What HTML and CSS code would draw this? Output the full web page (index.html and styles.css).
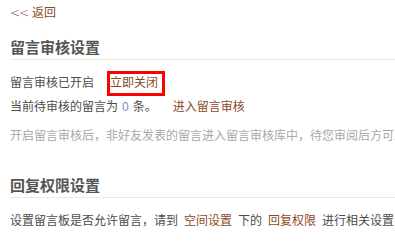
FILE: index.html
```html
<!DOCTYPE html>
<html lang="zh-CN">
<head>
<meta charset="utf-8">
<title>留言审核设置</title>
<link rel="stylesheet" href="styles.css">
</head>
<body>
<div class="page">
  <a class="back" href="#"><span class="chev">&lt;&lt;</span>返回</a>

  <section class="section first">
    <h2 class="title">留言审核设置</h2>
    <div class="body">
      <p class="row">留言审核已开启<a class="link highlight" href="#">立即关闭</a></p>
      <p class="row">当前待审核的留言为<span class="num">0</span>条。<a class="link gap" href="#">进入留言审核</a></p>
      <p class="row tip">开启留言审核后，非好友发表的留言进入留言审核库中，待您审阅后方可显示。</p>
    </div>
  </section>

  <section class="section second">
    <h2 class="title">回复权限设置</h2>
    <div class="body">
      <p class="row">设置留言板是否允许留言，请到<a class="link inline" href="#">空间设置</a>下的<a class="link inline" href="#">回复权限</a>进行相关设置</p>
    </div>
  </section>
</div>
</body>
</html>
```

FILE: styles.css
```css
html, body {
  margin: 0;
  padding: 0;
  background: #ffffff;
  overflow: hidden;
}

body {
  font-family: "Noto Sans CJK SC", "Noto Sans", sans-serif;
  font-size: 12px;
  color: #4c4c4c;
}

.page {
  padding-left: 10px;
}

a {
  text-decoration: none;
}

.back {
  display: block;
  line-height: 24px;
  height: 24px;
  color: #8a4a1f;
}

.chev {
  font-family: "DejaVu Sans", sans-serif;
  font-size: 12px;
  font-weight: 300;
  letter-spacing: -1px;
  margin-right: 4px;
}

.title {
  margin: 0;
  font-size: 15px;
  font-weight: bold;
  color: #555555;
  line-height: 24px;
  border-bottom: 1px solid #f0ead6;
}

.section.first {
  margin-top: 11px;
}

.section.second {
  margin-top: 26px;
}

.body {
  padding-top: 10px;
}

.row {
  margin: 0;
  line-height: 24px;
  white-space: nowrap;
}

.row.tip {
  margin-top: 4px;
  color: #a8a8a8;
}

.link {
  color: #8a4a1f;
}

.highlight {
  position: relative;
  margin-left: 16px;
}

.highlight::after {
  content: "";
  position: absolute;
  left: -3px;
  right: -7px;
  top: -2px;
  bottom: -6px;
  border: 3px solid #ff0000;
}

.gap {
  margin-left: 16px;
}

.inline {
  margin: 0 6px;
}

.num {
  font-family: "Liberation Sans", sans-serif;
  color: #6f8fc4;
  margin: 0 4px;
}
```
